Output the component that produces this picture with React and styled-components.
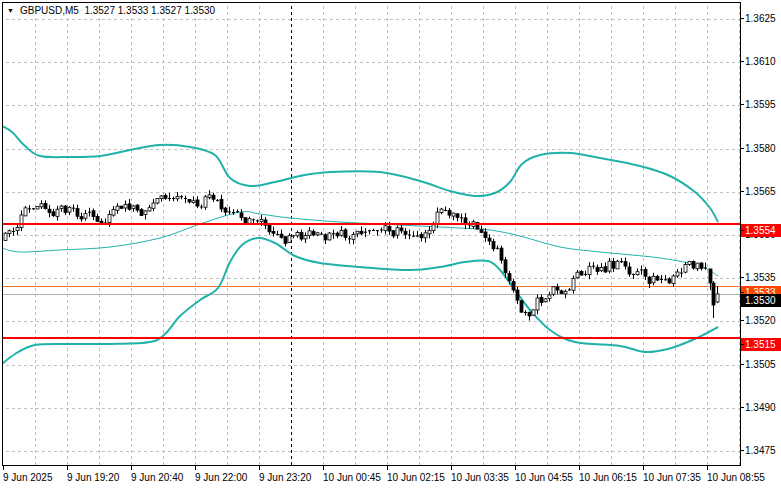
import React from 'react'
import styled, { createGlobalStyle } from 'styled-components'

const Global = createGlobalStyle`
  body { margin: 0; background: #fff; }
`

const Frame = styled.div`
  width: 781px;
  height: 489px;
  padding: 2px 0 0 2px;
  box-sizing: border-box;
  display: grid;
  grid-template-columns: 738px 41px;
  grid-template-rows: 464px 23px;
  font-family: 'Liberation Sans', Arial, sans-serif;
  font-size: 10px;
  color: #000;
`

const ChartCell = styled.div`
  position: relative;
  border: 1px solid #000;
  border-right: none;
`

const Header = styled.div`
  position: absolute;
  left: 4px;
  top: 2px;
  display: flex;
  gap: 6px;
  align-items: center;
  background: #fff;
  white-space: pre;
`

const Arrow = styled.span`
  font-size: 7px;
`

const Axis = styled.div`
  position: relative;
  border-left: 1px solid #000;
`

const PriceLabel = styled.div`
  position: absolute;
  left: 0;
  top: ${p => p.$y - 7}px;
  height: 13px;
  line-height: 13px;
  padding-left: 4px;
  width: 37px;
  background: ${p => p.$bg || 'transparent'};
  color: ${p => p.$fg || '#000'};
  &::before {
    content: '';
    position: absolute;
    left: 0;
    top: 6px;
    width: 3px;
    border-top: 1px solid #000;
  }
`

const TimeRow = styled.div`
  grid-column: 1 / 3;
  display: flex;
  padding-left: 1px;
`

const TimeLabel = styled.div`
  position: relative;
  flex: 0 0 64px;
  padding-top: 6px;
  white-space: nowrap;
  &::before {
    content: '';
    position: absolute;
    left: 0;
    top: 0;
    height: 4px;
    border-left: 1px solid #000;
  }
`

const py = p => 19 + (1.3625 - p) * 10000 * 2.88

const prices = [1.3625, 1.361, 1.3595, 1.358, 1.3565, 1.355, 1.3535, 1.352, 1.3505, 1.349, 1.3475]
const times = ['9 Jun 2025', '9 Jun 19:20', '9 Jun 20:40', '9 Jun 22:00', '9 Jun 23:20', '10 Jun 00:45', '10 Jun 02:15', '10 Jun 03:35', '10 Jun 04:55', '10 Jun 06:15', '10 Jun 07:35', '10 Jun 08:55']
const marks = [
  { y: 222, v: '1.3554', bg: '#ff0000' },
  { y: 284, v: '1.3533', bg: '#ff4500' },
  { y: 292, v: '1.3530', bg: '#000' },
  { y: 336, v: '1.3515', bg: '#ff0000' },
]

const upper = [[2,126],[12,132],[25,146],[40,156],[70,157],[100,156],[130,150],[160,145],[190,147],[215,155],[230,178],[250,186],[275,182],[300,176],[330,172],[380,172],[420,181],[450,191],[475,196],[495,193],[510,182],[522,164],[540,155],[570,153],[600,158],[640,166],[670,176],[695,192],[710,208],[718,222]]
const lower = [[2,364],[15,354],[35,345],[70,344],[110,344],[150,342],[165,334],[180,316],[200,300],[218,288],[230,262],[242,245],[258,238],[275,243],[295,256],[320,263],[360,267],[410,270],[440,267],[465,262],[488,261],[500,270],[515,290],[530,310],[550,330],[575,342],[620,346],[645,352],[668,349],[690,341],[705,334],[718,327]]
const middle = [[2,248],[20,252],[60,250],[110,247],[160,238],[200,224],[240,212],[260,214],[290,218],[340,222],[380,224],[420,226],[460,228],[490,230],[520,236],[560,247],[600,252],[660,258],[700,266],[718,276]]
const target = [[4,240],[20,212],[45,202],[70,212],[100,217],[130,212],[150,208],[175,205],[205,198],[230,215],[255,228],[280,242],[300,236],[330,236],[360,233],[400,228],[425,226],[440,205],[455,222],[480,228],[495,255],[510,290],[520,320],[535,297],[560,285],[585,268],[610,262],[630,270],[645,285],[670,275],[690,265],[706,272]]

const interp = (pts, x) => {
  for (let i = 1; i < pts.length; i++) {
    if (x <= pts[i][0]) {
      const [x0, y0] = pts[i - 1]
      const [x1, y1] = pts[i]
      return y0 + ((y1 - y0) * (x - x0)) / (x1 - x0)
    }
  }
  return pts[pts.length - 1][1]
}

// smooth curve through points (catmull-rom -> bezier)
const smooth = pts => {
  let d = `M${pts[0][0]},${pts[0][1]}`
  for (let i = 0; i < pts.length - 1; i++) {
    const p0 = pts[i - 1] || pts[i]
    const p1 = pts[i]
    const p2 = pts[i + 1]
    const p3 = pts[i + 2] || p2
    const c1 = [p1[0] + (p2[0] - p0[0]) / 6, p1[1] + (p2[1] - p0[1]) / 6]
    const c2 = [p2[0] - (p3[0] - p1[0]) / 6, p2[1] - (p3[1] - p1[1]) / 6]
    d += ` C${c1[0]},${c1[1]} ${c2[0]},${c2[1]} ${p2[0]},${p2[1]}`
  }
  return d
}

const rng = (() => {
  let a = 777
  return () => {
    a |= 0; a = (a + 0x6d2b79f5) | 0
    let t = Math.imul(a ^ (a >>> 15), 1 | a)
    t = (t + Math.imul(t ^ (t >>> 7), 61 | t)) ^ t
    return ((t ^ (t >>> 14)) >>> 0) / 4294967296
  }
})()

const candles = (() => {
  const out = []
  let prev = 240
  for (let x = 5; x <= 706; x += 4) {
    const t = interp(target, x)
    const open = prev + (rng() - 0.5) * 2
    const close = prev + (t - prev) * 0.45 + (rng() - 0.5) * 13
    const hi = Math.min(open, close) - rng() * 5
    const lo = Math.max(open, close) + rng() * 5
    out.push({ x, open, close, hi, lo })
    prev = close
  }
  out.push({ x: 710, open: prev, close: 283, hi: 281, lo: 290 })
  out.push({ x: 713, open: 283, close: 305, hi: 281, lo: 318 })
  out.push({ x: 717, open: 302, close: 294, hi: 286, lo: 303 })
  return out
})()

const Candle = ({ c }) => {
  const bear = c.close > c.open
  const top = Math.min(c.open, c.close)
  const h = Math.abs(c.close - c.open)
  return (
    <g>
      <line x1={c.x + 0.5} x2={c.x + 0.5} y1={c.hi} y2={c.lo} stroke="#000" />
      {h < 1.5 ? (
        <line x1={c.x - 1} x2={c.x + 2} y1={top + 0.5} y2={top + 0.5} stroke="#000" />
      ) : (
        <rect x={c.x - 1} y={top} width={3} height={h} fill={bear ? '#000' : '#fff'} stroke="#000" strokeWidth={0.8} />
      )}
    </g>
  )
}

const Chart = () => (
  <svg width="737" height="462" viewBox="3 3 737 462" style={{ display: 'block' }}>
    {Array.from({ length: 23 }, (_, i) => 35 + i * 32).map(x => (
      <line key={x} x1={x + 0.5} x2={x + 0.5} y1={0} y2={466} stroke={x === 291 ? '#000' : '#c0c0c0'} strokeDasharray="3 3" />
    ))}
    {prices.map(p => (
      <line key={p} x1={0} x2={740} y1={Math.round(py(p)) + 0.5} y2={Math.round(py(p)) + 0.5} stroke="#c0c0c0" strokeDasharray="3 3" />
    ))}
    <line x1={0} x2={740} y1={286.5} y2={286.5} stroke="#f07030" />
    <line x1={0} x2={740} y1={294.5} y2={294.5} stroke="#b0b0b0" />
    <path d={smooth(upper)} fill="none" stroke="#20b2aa" strokeWidth={2} />
    <path d={smooth(lower)} fill="none" stroke="#20b2aa" strokeWidth={2} />
    <path d={smooth(middle)} fill="none" stroke="#20b2aa" strokeWidth={1} />
    {candles.map(c => <Candle key={c.x} c={c} />)}
    <line x1={0} x2={740} y1={224} y2={224} stroke="#ff0000" strokeWidth={2} />
    <line x1={0} x2={740} y1={338} y2={338} stroke="#ff0000" strokeWidth={2} />
  </svg>
)

export default function App() {
  return (
    <Frame>
      <Global />
      <ChartCell>
        <Chart />
        <Header>
          <Arrow>▼</Arrow>
          <span>GBPUSD,M5  1.3527 1.3533 1.3527 1.3530</span>
        </Header>
      </ChartCell>
      <Axis>
        {prices.map(p => (
          <PriceLabel key={p} $y={py(p) - 2}>{p.toFixed(4)}</PriceLabel>
        ))}
        {marks.map(m => (
          <PriceLabel key={m.v} $y={m.y + 7} $bg={m.bg} $fg="#fff">{m.v}</PriceLabel>
        ))}
      </Axis>
      <TimeRow>
        {times.map(t => (
          <TimeLabel key={t}>{t}</TimeLabel>
        ))}
      </TimeRow>
    </Frame>
  )
}
